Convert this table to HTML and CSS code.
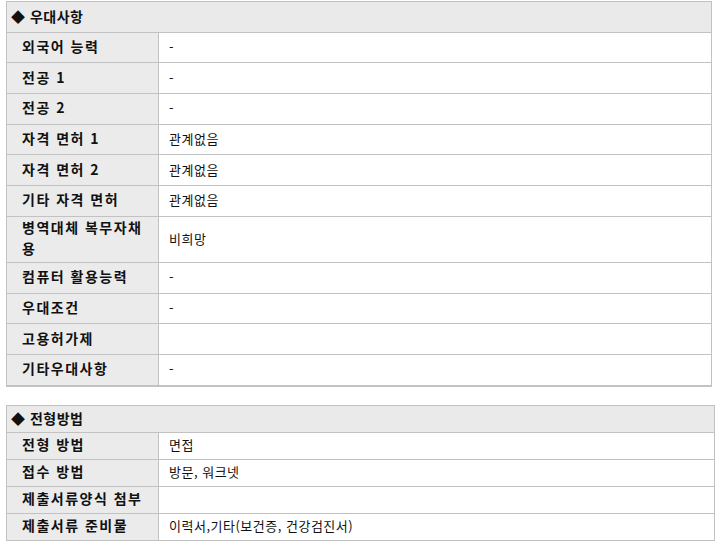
FILE: index.html
```html
<!DOCTYPE html>
<html lang="ko">
<head>
<meta charset="utf-8">
<title>우대사항</title>
<link rel="stylesheet" href="styles.css">
</head>
<body>
<section class="block block-pref">
  <div class="head">◆ 우대사항</div>
  <div class="row"><div class="lbl">외국어 능력</div><div class="val">-</div></div>
  <div class="row"><div class="lbl">전공 1</div><div class="val">-</div></div>
  <div class="row"><div class="lbl">전공 2</div><div class="val">-</div></div>
  <div class="row"><div class="lbl">자격 면허 1</div><div class="val">관계없음</div></div>
  <div class="row"><div class="lbl">자격 면허 2</div><div class="val">관계없음</div></div>
  <div class="row"><div class="lbl">기타 자격 면허</div><div class="val">관계없음</div></div>
  <div class="row tall"><div class="lbl">병역대체 복무자채용</div><div class="val">비희망</div></div>
  <div class="row"><div class="lbl">컴퓨터 활용능력</div><div class="val">-</div></div>
  <div class="row"><div class="lbl">우대조건</div><div class="val">-</div></div>
  <div class="row"><div class="lbl">고용허가제</div><div class="val"></div></div>
  <div class="row"><div class="lbl">기타우대사항</div><div class="val">-</div></div>
</section>
<section class="block block-sel">
  <div class="head">◆ 전형방법</div>
  <div class="row"><div class="lbl">전형 방법</div><div class="val">면접</div></div>
  <div class="row"><div class="lbl">접수 방법</div><div class="val">방문, 워크넷</div></div>
  <div class="row"><div class="lbl">제출서류양식 첨부</div><div class="val"></div></div>
  <div class="row"><div class="lbl">제출서류 준비물</div><div class="val">이력서,기타(보건증, 건강검진서)</div></div>
</section>
</body>
</html>
```
FILE: styles.css
```css
html, body {
  margin: 0;
  padding: 0;
  background: #ffffff;
}
body {
  padding: 1px 0 0 6px;
  font-family: "Noto Sans CJK KR", "Noto Sans", sans-serif;
  font-size: 13px;
  color: #111;
}
.block {
  border: 1px solid #c2c2c2;
  display: flex;
  flex-direction: column;
}
.block-pref {
  width: 704px;
  border-bottom: 2px solid #c2c2c2;
}
.block-sel {
  width: 707px;
  margin-top: 18px;
}
.head {
  background: #eaeaea;
  font-weight: bold;
  font-size: 14px;
  letter-spacing: 0.5px;
  padding: 0 0 2px 4px;
  display: flex;
  align-items: center;
  height: 29.7px;
  line-height: 16px;
  box-sizing: border-box;
}
.row {
  display: grid;
  grid-template-columns: 152px 1fr;
  border-top: 1px solid #c2c2c2;
  height: 29.7px;
}
.row.tall {
  height: 45px;
}
.lbl {
  background: #ebebeb;
  border-right: 1px solid #c2c2c2;
  font-weight: bold;
  font-size: 14px;
  padding: 0 8px 2px 15px;
  display: flex;
  align-items: center;
  line-height: 21px;
  letter-spacing: 1.5px;
}
.val {
  padding: 0 0 1px 10px;
  display: flex;
  align-items: center;
  line-height: 16px;
  letter-spacing: 0.5px;
}
.block-sel .head {
  height: 26px;
}
.block-sel .row {
  height: 26px;
}
```
